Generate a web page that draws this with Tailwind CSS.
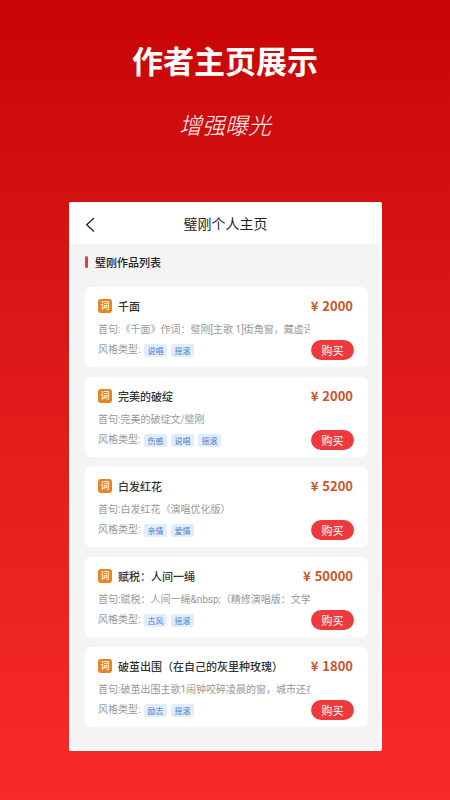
<!DOCTYPE html>
<html lang="zh-CN">
<head>
    <meta charset="UTF-8">
    <meta name="viewport" content="width=device-width, initial-scale=1.0">
    <title>作者主页展示</title>
    <script src="https://cdn.jsdelivr.net/npm/@tailwindcss/browser@4"></script>
</head>
<body class="min-h-screen bg-linear-to-b from-[#c80405] to-[#f92a2a] font-['Noto_Sans_CJK_SC',sans-serif]">
    <header class="pt-[38px] text-center text-white">
        <h1 class="text-[31px] leading-11 font-bold">作者主页展示</h1>
        <p class="mt-7 text-[23px] leading-7 font-light italic">增强曝光</p>
    </header>

    <main class="mt-16 mr-[68px] ml-[69px] rounded-xs bg-white px-0.5 pb-1">
        <!-- Nav bar -->
        <div class="grid h-[42px] grid-cols-[40px_1fr_40px] items-center">
            <button type="button" aria-label="返回" class="flex h-full items-center pl-3 text-[#222222]">
                <svg class="h-[18px] w-4" viewBox="0 0 16 18" fill="none" stroke="currentColor" stroke-width="1.3">
                    <path d="M11 4 L3.700 10.700 L11 17.500" />
                </svg>
            </button>
            <h2 class="text-center text-[14px] leading-5 text-[#1f1f1f]">璧刚个人主页</h2>
        </div>

        <section class="bg-[#f4f4f5] pt-[11px] pr-3 pb-5 pl-3.5">
            <h3 class="flex items-center gap-[7px] text-[11px] leading-3.5 font-medium text-[#1f1f1f]">
                <span class="h-3 w-[3px] rounded-xs bg-[#e04045]"></span>璧刚作品列表
            </h3>
            <div id="workList" class="mt-[18px] flex flex-col gap-2.5"></div>
        </section>
    </main>

    <template id="workCard">
        <article class="h-20 rounded-md bg-white pt-2.5 pr-3.5 pl-[13px]">
            <div class="flex h-[18px] items-center">
                <span class="flex h-3.5 w-3.5 shrink-0 items-center justify-center rounded-[3px] bg-[#ea8420] text-[9px] leading-3 font-medium text-white">词</span>
                <h4 data-title class="ml-1.5 flex-1 text-[11px] font-medium whitespace-nowrap text-[#333333]"></h4>
                <p class="flex items-center gap-1 pr-px text-[13px] leading-4 font-bold text-[#cc5227]"><span>¥</span><span data-price></span></p>
            </div>
            <p data-first class="mt-[7px] mr-11 overflow-hidden font-[Roboto,'Noto_Sans_CJK_SC',sans-serif] text-[10px] leading-4 whitespace-nowrap text-[#999999]"></p>
            <div class="flex h-6 items-center">
                <span class="w-[46px] shrink-0 font-[Roboto,'Noto_Sans_CJK_SC',sans-serif] text-[10px] leading-4 text-[#999999]">风格类型:</span>
                <span data-tags class="flex flex-1 gap-1"></span>
                <button type="button" class="h-5 w-[43px] rounded-full bg-[#ee3a3f] text-[11px] leading-5 text-white">购买</button>
            </div>
        </article>
    </template>

    <script>
        const works = [
            { title: "千面", price: 2000, first: "《千面》作词：璧刚[主歌 1]街角窗，藏虚评", tags: ["说唱", "摇滚"] },
            { title: "完美的破绽", price: 2000, first: "完美的破绽文/璧刚", tags: ["伤感", "说唱", "摇滚"] },
            { title: "白发红花", price: 5200, first: "白发红花（演唱优化版）", tags: ["亲情", "爱情"] },
            { title: "赋税：人间一绳", price: 50000, first: "赋税：人间一绳&nbsp;（精修演唱版：文学", tags: ["古风", "摇滚"] },
            { title: "破茧出围（在自己的灰里种玫瑰）", price: 1800, first: "破茧出围主歌1闹钟咬碎凌晨的窗，城市还在", tags: ["励志", "摇滚"] }
        ];

        const list = document.getElementById("workList");
        const template = document.getElementById("workCard");

        works.forEach(work => {
            const card = template.content.cloneNode(true);
            card.querySelector("[data-title]").textContent = work.title;
            card.querySelector("[data-price]").textContent = work.price;
            card.querySelector("[data-first]").textContent = "首句:" + work.first;
            work.tags.forEach(name => {
                const tag = document.createElement("span");
                tag.className = "min-w-[23px] rounded-xs bg-[#e2ecfa] px-[3px] text-center text-[8px] leading-[13px] text-[#4a7fc8]";
                tag.textContent = name;
                card.querySelector("[data-tags]").appendChild(tag);
            });
            list.appendChild(card);
        });
    </script>
</body>
</html>
